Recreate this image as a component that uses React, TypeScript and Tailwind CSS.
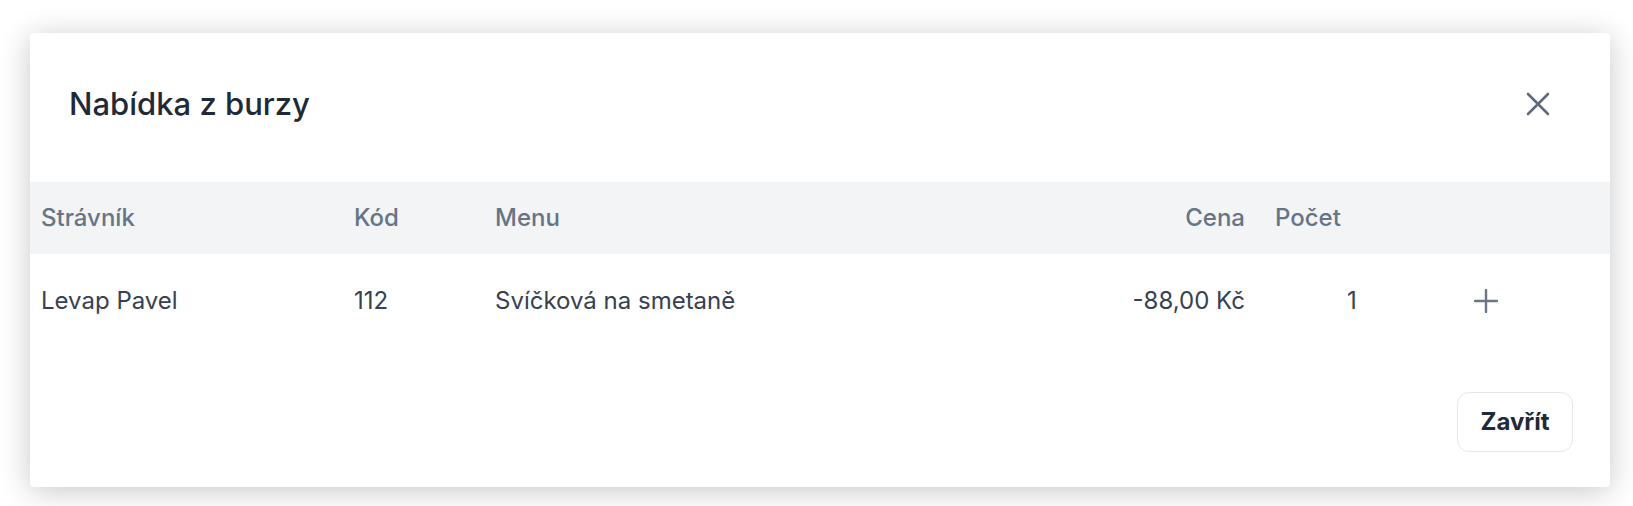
import React from 'react';

const font = { fontFamily: 'Inter, "Liberation Sans", sans-serif' };

function CloseIcon() {
  return (
    <svg width="24" height="24" viewBox="0 0 24 24" fill="none" stroke="#5f6b7a" strokeWidth="2.6" strokeLinecap="round">
      <path d="M2 2L22 22M22 2L2 22" />
    </svg>
  );
}

function PlusIcon() {
  return (
    <svg width="24" height="24" viewBox="0 0 24 24" fill="none" stroke="#6b7684" strokeWidth="2.4" strokeLinecap="round">
      <path d="M12 1v22M1 12h22" />
    </svg>
  );
}

export default function App() {
  return (
    <div className="min-h-screen bg-white pt-[33px] pl-[30px]" style={font}>
      <div className="w-[1580px] h-[454px] bg-white rounded-[4px] shadow-[0_4px_30px_rgba(0,0,0,0.22)] flex flex-col">
        {/* header */}
        <div className="h-[149px] flex items-start justify-between pl-[39px] pr-[48px] pt-[51px]">
          <h2 className="text-[31px] leading-[40px] font-medium text-[#1f2937]">Nabídka z burzy</h2>
          <button className="w-[48px] h-[48px] -mt-[4px] flex items-center justify-center">
            <CloseIcon />
          </button>
        </div>

        {/* table head */}
        <div className="h-[72px] bg-[#f3f4f6] grid grid-cols-[313px_141px_1fr_163px_177px_170px] items-center text-[24px] font-medium text-[#667487]">
          <div className="pl-[11px]">Strávník</div>
          <div className="pl-[11px]">Kód</div>
          <div className="pl-[11px]">Menu</div>
          <div className="pr-[18px] text-right">Cena</div>
          <div className="pl-[12px]">Počet</div>
          <div />
        </div>

        {/* row */}
        <div className="h-[93px] grid grid-cols-[313px_141px_1fr_163px_177px_170px] items-center text-[24px] text-[#374151]">
          <div className="pl-[11px]">Levap Pavel</div>
          <div className="pl-[11px]">112</div>
          <div className="pl-[11px]">Svíčková na smetaně</div>
          <div className="pr-[18px] text-right">-88,00 Kč</div>
          <div className="pl-[84px]">1</div>
          <div className="pl-[34px] flex items-center">
            <PlusIcon />
          </div>
        </div>

        {/* footer */}
        <div className="flex justify-end pr-[37px] mt-[45px]">
          <button className="w-[116px] h-[60px] border border-[#e5e7eb] rounded-[12px] text-[24px] font-bold text-[#1f2937]">
            Zavřít
          </button>
        </div>
      </div>
    </div>
  );
}
